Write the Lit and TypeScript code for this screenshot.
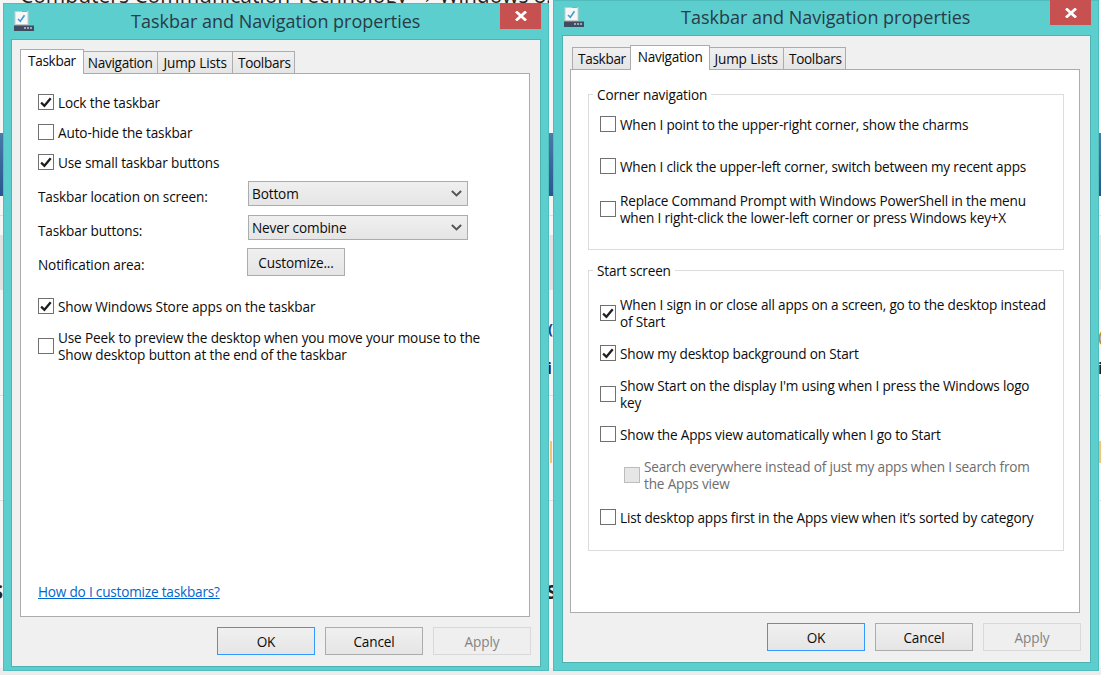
import { LitElement, html, css, svg } from "lit";
import { customElement } from "lit/decorators.js";

const CHECK = svg`<svg class="tick" viewBox="0 0 16 16" width="15" height="15"><path d="M2.4 8.2 L6.2 11.8 L13.4 3.2" fill="none" stroke="#1e1e1e" stroke-width="2.6"/></svg>`;

const ICON = svg`<svg class="appicon" viewBox="0 0 20 20" width="20" height="20">
  <rect x="1" y="0.5" width="13" height="13" fill="#f7f7f7" stroke="#c9c9c9"/>
  <rect x="8" y="0" width="5" height="1" fill="#d98a8a"/>
  <path d="M4 8 L6.3 10.3 L10.5 4.2" fill="none" stroke="#3f9ad8" stroke-width="1.6"/>
  <rect x="0" y="14.5" width="20" height="5.5" fill="#3d4c60"/>
  <rect x="10" y="16" width="2" height="2" fill="#9aa6b4"/><rect x="13" y="16" width="2" height="2" fill="#9aa6b4"/><rect x="16" y="16" width="2" height="2" fill="#9aa6b4"/>
</svg>`;

const CLOSE = svg`<svg viewBox="0 0 12 10" width="12" height="10"><path d="M1 0.5 L11 9.5 M11 0.5 L1 9.5" stroke="#fff" stroke-width="2.8" fill="none"/></svg>`;

const CHEVRON = svg`<svg class="chev" viewBox="0 0 10 6" width="11" height="7"><path d="M0.8 0.8 L5 4.8 L9.2 0.8" fill="none" stroke="#555" stroke-width="1.8"/></svg>`;

const TABS = [
  { label: "Taskbar", cls: "" },
  { label: "Navigation", cls: "" },
  { label: "Jump Lists", cls: "jump" },
  { label: "Toolbars", cls: "tool" },
];

@customElement("app-root")
export class AppRoot extends LitElement {
  static styles = css`
    :host { display: block; width: 1101px; height: 675px; position: relative; overflow: hidden; background: #f6f6f6;
      font-family: "Open Sans", "Noto Sans", sans-serif; font-size: 13.6px; letter-spacing: -0.14px; color: #0c0c0c; }
    .bg { position: absolute; inset: 0; overflow: hidden; }
    .stripclip { position: absolute; left: 0; top: 0; width: 549px; height: 3px; overflow: hidden; }
    .strip { position: absolute; left: 20px; top: -19px; white-space: nowrap; font-size: 21px; color: #222; letter-spacing: 0; }
    .blue { position: absolute; left: 0; right: 0; top: 133px; height: 63px; background: linear-gradient(#4a7aa8, #27578f); }
    .grey { position: absolute; left: 0; right: 0; top: 235px; height: 55px; background: #e2e2e2; }
    .line { position: absolute; left: 0; right: 0; height: 1px; background: #dedede; }
    .l1 { top: 215px; } .l2 { top: 395px; } .l3 { top: 500px; } .l4 { top: 668px; height: 7px; background: #ececec; }
    .orange { position: absolute; left: 550px; top: 441px; width: 2px; height: 22px; background: #f5c27a; }
    .orange.r { left: 1099px; }
    .frag { position: absolute; font-size: 20px; font-weight: 700; color: #222; line-height: 20px; }
    .f1 { left: -8px; top: 582px; } .f2 { left: 546px; top: 582px; }
    .f3 { left: 547px; top: 358px; font-size: 16px; } .f4 { left: 1098px; top: 358px; font-size: 16px; }
    .f5 { left: 548px; top: 318px; font-size: 15px; color: #1a3e90; } .f6 { left: 1098px; top: 326px; font-size: 15px; color: #c98a20; }

    .win { position: absolute; box-sizing: border-box; display: flex; flex-direction: column; background: #5ccece; box-shadow: inset 0 0 0 1px #50bcbc; }
    .w1 { left: 3px; top: 3px; width: 546px; height: 668px; padding: 36px 8px 4px 8px; }
    .w2 { left: 553px; top: 0; width: 546px; height: 671px; padding: 35px 8px 8px 9px; }
    .appicon { position: absolute; left: 11px; top: 8px; }
    .w2 .appicon { top: 7px; }
    .title { position: absolute; left: 128px; top: 5px; font-size: 18px; line-height: 26px; color: #2a3b47; letter-spacing: 0; white-space: nowrap; }
    .w2 .title { top: 4px; }
    .close { position: absolute; right: 8px; top: 0; width: 41px; height: 26px; background: #c75050; display: flex; align-items: center; justify-content: center; }
    .w2 .close { height: 25px; }
    .inner { flex: 1; display: flex; flex-direction: column; background: #f0f0f0; border: 1px solid #4eb2b2; padding: 9px 10px 10px 8px; min-height: 0; }
    .w2 .inner { padding-left: 7px; }
    .tabs { display: flex; align-items: flex-end; height: 24px; padding-left: 2px; position: relative; z-index: 1; letter-spacing: -0.32px; }
    .tab { box-sizing: border-box; height: 22px; padding: 0 5px; margin-left: -1px; border: 1px solid #acacac; border-bottom: none; background: linear-gradient(#f0f0f0, #e5e5e5); line-height: 22px; margin-bottom: 0; white-space: nowrap; }
    .tab:first-child { margin-left: 0; }
    .tab.jump { letter-spacing: -0.12px; }
    .tab.tool { padding-right: 3px; }
    .tab.on { height: 25px; margin: 0 -3px -1px -2px; padding: 0 7px; background: #fff; position: relative; z-index: 1; line-height: 21px; }
    .tab.on + .tab { margin-left: 1px; }
    .panel { box-sizing: border-box; height: 544px; background: #fff; border: 1px solid #acacac; display: flex; flex-direction: column; padding: 18px 16px 14px 17px; }
    .panel.nav { padding: 13px 15px 0 17px; letter-spacing: -0.18px; }
    .row { display: flex; align-items: center; gap: 4px; line-height: 17px; min-height: 20px; }
    .box { box-sizing: border-box; flex: none; width: 16px; height: 16px; border: 1px solid #707070; background: #fff; display: flex; align-items: center; justify-content: center; }
    .box.off { background: #e6e6e6; border-color: #bcbcbc; }
    .dis { color: #6d6d6d; }
    .gap10 { margin-top: 10px; } .gap13 { margin-top: 13px; } .gap14 { margin-top: 14px; } .gap15 { margin-top: 15px; }
    .gap16 { margin-top: 16px; } .gap20 { margin-top: 20px; } .gap22 { margin-top: 22px; } .gap9 { margin-top: 9px; } .gap8 { margin-top: 8px; }
    .field { display: flex; align-items: center; }
    .flabel { width: 210px; padding-top: 4px; line-height: 17px; }
    .flabel.mid { padding-top: 5px; }
    .flabel.low { padding-top: 6px; }
    .combo { box-sizing: border-box; width: 220px; height: 25px; border: 1px solid #acacac; background: linear-gradient(#f0f0f0, #e5e5e5); display: flex; align-items: center; justify-content: space-between; padding: 0 5px 0 3px; }
    .btn { box-sizing: border-box; width: 98px; height: 28px; border: 1px solid #acacac; background: linear-gradient(#f0f0f0, #e5e5e5); display: flex; align-items: center; justify-content: center; }
    .btn.default { border-color: #3399ff; }
    .btn.disabled { border-color: #d9d9d9; background: #efefef; color: #838383; }
    .field .btn { margin-left: -1px; }
    .link { margin-top: auto; line-height: 20px; color: #0066cc; text-decoration: underline; letter-spacing: -0.2px; }
    .footer { display: flex; justify-content: flex-end; gap: 10px; margin-top: 10px; margin-right: -1px; }
    fieldset { margin: 0; padding: 0 0 0 11px; border: 1px solid #dcdcdc; min-width: 0; width: 476px; box-sizing: border-box; }
    legend { margin-left: -7px; padding: 2px 4px 0; line-height: 20px; }
    .g1 { padding-top: 9px; padding-bottom: 23px; }
    .g2 { margin-top: 9px; padding-top: 15px; padding-bottom: 23px; }
    .indent { margin-left: 24px; }
  `;

  private check(on: boolean, off = false) {
    return html`<span class="box ${off ? "off" : ""}">${on ? CHECK : ""}</span>`;
  }

  private row(text: unknown, on: boolean, cls = "") {
    return html`<div class="row ${cls}">${this.check(on)}<span>${text}</span></div>`;
  }

  private chrome(cls: string, active: string, body: unknown) {
    return html`<section class="win ${cls}">
      ${ICON}
      <div class="title">Taskbar and Navigation properties</div>
      <div class="close">${CLOSE}</div>
      <div class="inner">
        <div class="tabs">${TABS.map((t) => html`<div class="tab ${t.cls} ${t.label === active ? "on" : ""}">${t.label}</div>`)}</div>
        ${body}
        <div class="footer">
          <div class="btn default">OK</div>
          <div class="btn">Cancel</div>
          <div class="btn disabled">Apply</div>
        </div>
      </div>
    </section>`;
  }

  render() {
    return html`
      <div class="bg">
        <div class="stripclip"><div class="strip">Computers  Communication  Technology  →  Windows 8.1 Tutorials and Tips</div></div>
        <div class="line l1"></div><div class="line l2"></div><div class="line l3"></div><div class="line l4"></div>
        <div class="blue"></div><div class="grey"></div>
        <div class="orange"></div><div class="orange r"></div>
        <div class="frag f1">S</div><div class="frag f2">S</div>
        <div class="frag f3">i</div><div class="frag f4">i</div>
        <div class="frag f5">(</div><div class="frag f6">(</div>
      </div>

      ${this.chrome("w1", "Taskbar", html`<div class="panel">
        ${this.row("Lock the taskbar", true)}
        ${this.row("Auto-hide the taskbar", false, "gap10")}
        ${this.row("Use small taskbar buttons", true, "gap10")}
        <div class="field gap9"><span class="flabel low">Taskbar location on screen:</span><div class="combo"><span>Bottom</span>${CHEVRON}</div></div>
        <div class="field gap9"><span class="flabel mid">Taskbar buttons:</span><div class="combo"><span>Never combine</span>${CHEVRON}</div></div>
        <div class="field gap8"><span class="flabel">Notification area:</span><div class="btn">Customize...</div></div>
        ${this.row("Show Windows Store apps on the taskbar", true, "gap20")}
        ${this.row(html`Use Peek to preview the desktop when you move your mouse to the<br />Show desktop button at the end of the taskbar`, false, "gap13")}
        <div class="link">How do I customize taskbars?</div>
      </div>`)}

      ${this.chrome("w2", "Navigation", html`<div class="panel nav">
        <fieldset class="g1">
          <legend>Corner navigation</legend>
          ${this.row("When I point to the upper-right corner, show the charms", false)}
          ${this.row("When I click the upper-left corner, switch between my recent apps", false, "gap22")}
          ${this.row(html`Replace Command Prompt with Windows PowerShell in the menu<br />when I right-click the lower-left corner or press Windows key+X`, false, "gap16")}
        </fieldset>
        <fieldset class="g2">
          <legend>Start screen</legend>
          ${this.row(html`When I sign in or close all apps on a screen, go to the desktop instead<br />of Start`, true)}
          ${this.row("Show my desktop background on Start", true, "gap13")}
          ${this.row(html`Show Start on the display I'm using when I press the Windows logo<br />key`, false, "gap14")}
          ${this.row("Show the Apps view automatically when I go to Start", false, "gap13")}
          <div class="row gap14 indent dis">${this.check(false, true)}<span>Search everywhere instead of just my apps when I search from<br />the Apps view</span></div>
          ${this.row("List desktop apps first in the Apps view when it’s sorted by category", false, "gap15")}
        </fieldset>
      </div>`)}
    `;
  }
}
